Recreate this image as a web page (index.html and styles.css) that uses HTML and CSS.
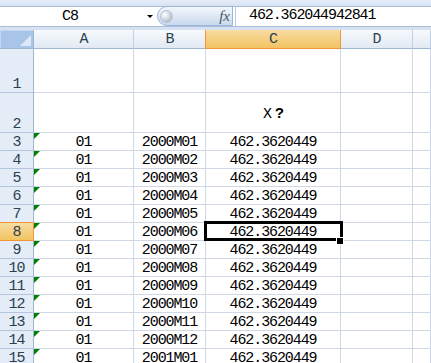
FILE: index.html
```html
<!DOCTYPE html>
<html>
<head>
<meta charset="utf-8">
<link rel="stylesheet" href="styles.css">
</head>
<body>
<div class="app">
  <div class="ribbon-edge"></div>
  <div class="fbar">
    <div class="namebox"><span class="name">C8</span><span class="dd"></span></div>
    <div class="tools"><span class="knob"></span><span class="fx">fx</span></div>
    <div class="formula">462.362044942841</div>
  </div>
  <div class="band"></div>
  <div class="sheet">
    <div class="corner"><span class="corner-tri"></span></div>
    <div class="ch">A</div>
    <div class="ch pre-sel">B</div>
    <div class="ch sel-h">C</div>
    <div class="ch">D</div>
    <div class="ch"></div>

    <div class="rh">1</div><div class="c"></div><div class="c"></div><div class="c"></div><div class="c"></div><div class="c"></div>
    <div class="rh">2</div><div class="c"></div><div class="c"></div><div class="c mid">X<span class="fw">?</span></div><div class="c"></div><div class="c"></div>

    <div class="rh">3</div><div class="c tri">01</div><div class="c">2000M01</div><div class="c">462.3620449</div><div class="c"></div><div class="c"></div>
    <div class="rh">4</div><div class="c tri">01</div><div class="c">2000M02</div><div class="c">462.3620449</div><div class="c"></div><div class="c"></div>
    <div class="rh">5</div><div class="c tri">01</div><div class="c">2000M03</div><div class="c">462.3620449</div><div class="c"></div><div class="c"></div>
    <div class="rh">6</div><div class="c tri">01</div><div class="c">2000M04</div><div class="c">462.3620449</div><div class="c"></div><div class="c"></div>
    <div class="rh pre-sel-row">7</div><div class="c tri">01</div><div class="c">2000M05</div><div class="c">462.3620449</div><div class="c"></div><div class="c"></div>
    <div class="rh sel-r">8</div><div class="c tri">01</div><div class="c">2000M06</div><div class="c">462.3620449</div><div class="c"></div><div class="c"></div>
    <div class="rh">9</div><div class="c tri">01</div><div class="c">2000M07</div><div class="c">462.3620449</div><div class="c"></div><div class="c"></div>
    <div class="rh">10</div><div class="c tri">01</div><div class="c">2000M08</div><div class="c">462.3620449</div><div class="c"></div><div class="c"></div>
    <div class="rh">11</div><div class="c tri">01</div><div class="c">2000M09</div><div class="c">462.3620449</div><div class="c"></div><div class="c"></div>
    <div class="rh">12</div><div class="c tri">01</div><div class="c">2000M10</div><div class="c">462.3620449</div><div class="c"></div><div class="c"></div>
    <div class="rh">13</div><div class="c tri">01</div><div class="c">2000M11</div><div class="c">462.3620449</div><div class="c"></div><div class="c"></div>
    <div class="rh">14</div><div class="c tri">01</div><div class="c">2000M12</div><div class="c">462.3620449</div><div class="c"></div><div class="c"></div>
    <div class="rh">15</div><div class="c tri">01</div><div class="c">2001M01</div><div class="c">462.3620449</div><div class="c"></div><div class="c"></div>

    <div class="selection"></div>
    <div class="fill-handle"></div>
  </div>
</div>
</body>
</html>
```

FILE: styles.css
```css
html, body {
  margin: 0;
  padding: 0;
  background: #ffffff;
}
body {
  width: 431px;
  height: 363px;
  overflow: hidden;
  font-family: "Liberation Mono", "Noto Sans CJK SC", monospace;
  font-size: 15px;
  letter-spacing: -1.1px;
  color: #000;
}
.app {
  width: 431px;
  height: 363px;
  overflow: hidden;
  background: #dbe6f4;
}
.ribbon-edge {
  height: 7px;
  background: linear-gradient(#e6eef8, #d6e2f2);
  border-bottom: 1px solid #a9bdd8;
  box-sizing: border-box;
}
.fbar {
  display: flex;
  height: 20px;
  border-bottom: 1px solid #a9bdd8;
  box-sizing: border-box;
  background: #fff;
}
.namebox {
  width: 157px;
  display: flex;
  align-items: center;
  background: #fff;
}
.name {
  width: 140px;
  text-align: center;
  line-height: 18px;
}
.dd {
  width: 0;
  height: 0;
  border-left: 3px solid transparent;
  border-right: 3px solid transparent;
  border-top: 3px solid #000;
  margin-left: 7px;
}
.tools {
  width: 76px;
  display: flex;
  align-items: center;
  justify-content: space-between;
  box-sizing: border-box;
  padding: 0 1px 0 3px;
  background: linear-gradient(#f3f7fc, #dfe8f5 50%, #c9d9ee);
  border: 1px solid #9db5d6;
  border-radius: 10px 0 0 10px;
  margin-top: -1px;
  height: 20px;
}
.knob {
  width: 11px;
  height: 11px;
  border-radius: 50%;
  background: radial-gradient(circle at 35% 35%, #ffffff, #d4dae2 45%, #8e9bab);
  box-shadow: 0 0 0 1px #b6c3d4;
}
.fx {
  font-family: "Liberation Serif", serif;
  font-style: italic;
  font-size: 15px;
  letter-spacing: 0;
  color: #4b5563;
  line-height: 18px;
  padding-right: 1px;
}
.formula {
  flex: 1;
  padding-left: 13px;
  line-height: 18px;
  border-left: 1px solid #b8c9df;
  margin-left: 2px;
  background: #fff;
}
.band {
  height: 3px;
  background: #d6e2f1;
}
.sheet {
  position: relative;
  display: grid;
  grid-template-columns: 34px 100px 72px 135px 72px 1fr;
  grid-template-rows: 19px 44px 40px repeat(13, 18px);
  background: #fff;
}
.sheet > div {
  box-sizing: border-box;
}
.corner {
  background: #a9c4e9;
  border-right: 1px solid #9eb6ce;
  border-bottom: 1px solid #9eb6ce;
  box-shadow: inset 1px 1px 0 #c6d8f0;
  display: flex;
  justify-content: flex-end;
  align-items: flex-end;
  padding: 0 2px 2px 0;
}
.corner-tri {
  width: 0;
  height: 0;
  border-left: 11px solid transparent;
  border-bottom: 11px solid #dfe9f6;
}
.ch {
  background: linear-gradient(#f7fafd, #e2e9f4);
  border-right: 1px solid #c0cfe2;
  border-bottom: 1px solid #9eb6ce;
  color: #2a4150;
  display: flex;
  align-items: center;
  justify-content: center;
  line-height: 15px;
  padding-top: 1px;
}
.ch.pre-sel {
  border-right-color: #f29536;
}
.ch.sel-h {
  background: linear-gradient(#f9dca2, #f2c362);
  border-right-color: #f29536;
  border-bottom-color: #f29536;
}
.rh {
  background: #e4ecf7;
  border-right: 1px solid #9eb6ce;
  border-bottom: 1px solid #b3c6dd;
  color: #2a4150;
  display: flex;
  align-items: flex-end;
  justify-content: center;
  line-height: 15px;
}
.rh.pre-sel-row {
  border-bottom-color: #f29536;
}
.rh.sel-r {
  background: linear-gradient(#f9dca2, #f2c362);
  border-right-color: #f29536;
  border-bottom-color: #f29536;
}
.c {
  border-right: 1px solid #d0d7e5;
  border-bottom: 1px solid #d0d7e5;
  display: flex;
  align-items: flex-end;
  justify-content: center;
  line-height: 15px;
  white-space: nowrap;
}
.c.mid {
  align-items: center;
  padding-top: 3px;
}
.fw {
  font-weight: 700;
  margin-left: 4px;
}
.c.tri {
  position: relative;
}
.c.tri::before {
  content: "";
  position: absolute;
  left: 0;
  top: 0;
  width: 0;
  height: 0;
  border-top: 6px solid #007f00;
  border-right: 6px solid transparent;
}
.selection {
  position: absolute;
  left: 204px;
  top: 191px;
  width: 139px;
  height: 20px;
  border: 3px solid #000;
  box-sizing: border-box;
}
.fill-handle {
  position: absolute;
  left: 336px;
  top: 207px;
  width: 8px;
  height: 8px;
  background: #000;
  border: 1px solid #fff;
  box-sizing: border-box;
}
```
